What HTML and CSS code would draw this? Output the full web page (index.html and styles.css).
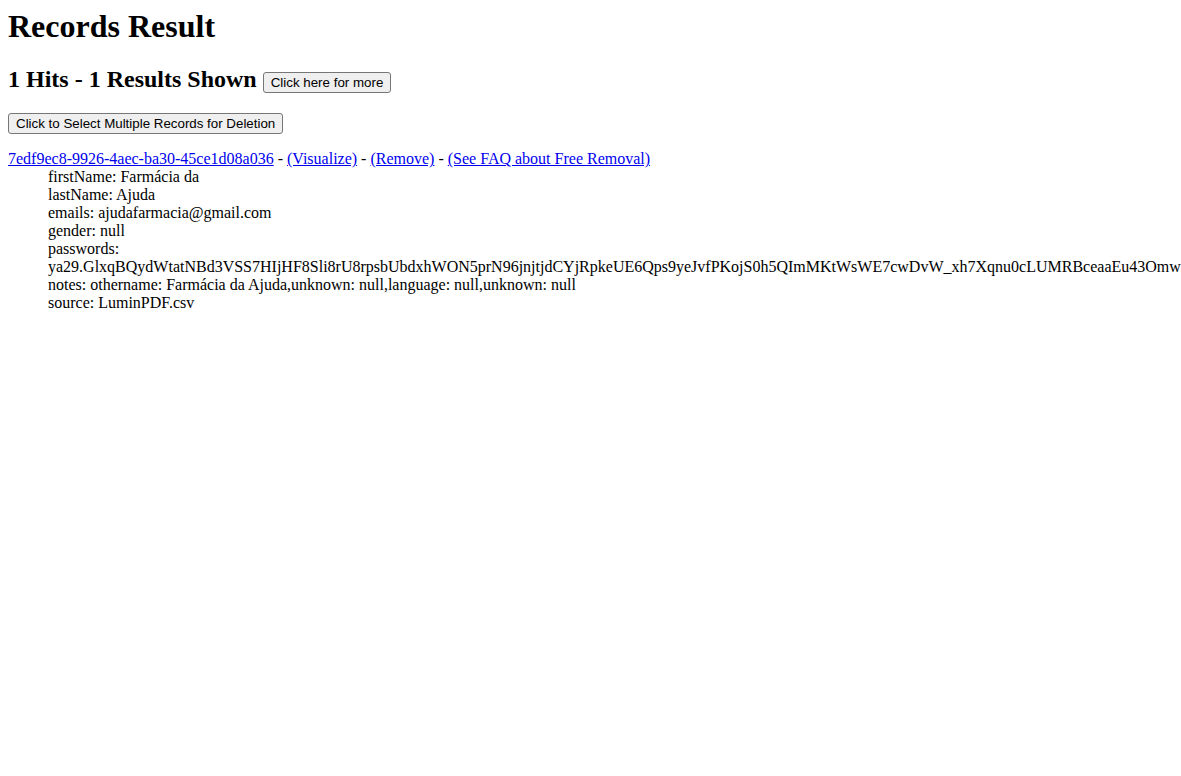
FILE: index.html
```html
<!DOCTYPE html>
<html>
<head>
<meta charset="utf-8">
<title>Records Result</title>
<link rel="stylesheet" href="styles.css">
</head>
<body>
<h1 class="title">Records Result</h1>
<h2 class="hits">1 Hits - 1 Results Shown <button class="btn" type="button">Click here for more</button></h2>
<form class="select-form">
<button class="btn" type="button">Click to Select Multiple Records for Deletion</button>
</form>
<div class="record">
<div class="record-head"><a href="#">7edf9ec8-9926-4aec-ba30-45ce1d08a036</a> - <a href="#">(Visualize)</a> - <a href="#">(Remove)</a> - <a href="#">(See FAQ about Free Removal)</a></div>
<div class="fields">
<div>firstName: Farmácia da</div>
<div>lastName: Ajuda</div>
<div>emails: ajudafarmacia@gmail.com</div>
<div>gender: null</div>
<div>passwords: ya29.GlxqBQydWtatNBd3VSS7HIjHF8Sli8rU8rpsbUbdxhWON5prN96jnjtjdCYjRpkeUE6Qps9yeJvfPKojS0h5QImMKtWsWE7cwDvW_xh7Xqnu0cLUMRBceaaEu43Omw</div>
<div>notes: othername: Farmácia da Ajuda,unknown: null,language: null,unknown: null</div>
<div>source: LuminPDF.csv</div>
</div>
</div>
</body>
</html>
```
FILE: styles.css
```css
html, body {
  background: #fff;
}
body {
  margin: 8px 0 8px 8px;
  font-family: "Liberation Serif", "Times New Roman", serif;
  font-size: 16px;
  color: #000;
}
.title {
  font-size: 32px;
  font-weight: bold;
  margin: 0 0 21.44px;
}
.hits {
  font-size: 24px;
  font-weight: bold;
  margin: 0 0 19.92px;
}
.btn {
  font-family: "Liberation Sans", Arial, sans-serif;
  font-size: 13.333px;
  color: #000;
  background: #efefef;
  border: 1px solid #767676;
  border-radius: 3px;
  padding: 2px 7px;
  vertical-align: baseline;
}
.select-form {
  margin: 0 0 16px;
}
.record a {
  color: #0000ee;
  text-decoration: underline;
}
.fields {
  padding-left: 40px;
}
```
